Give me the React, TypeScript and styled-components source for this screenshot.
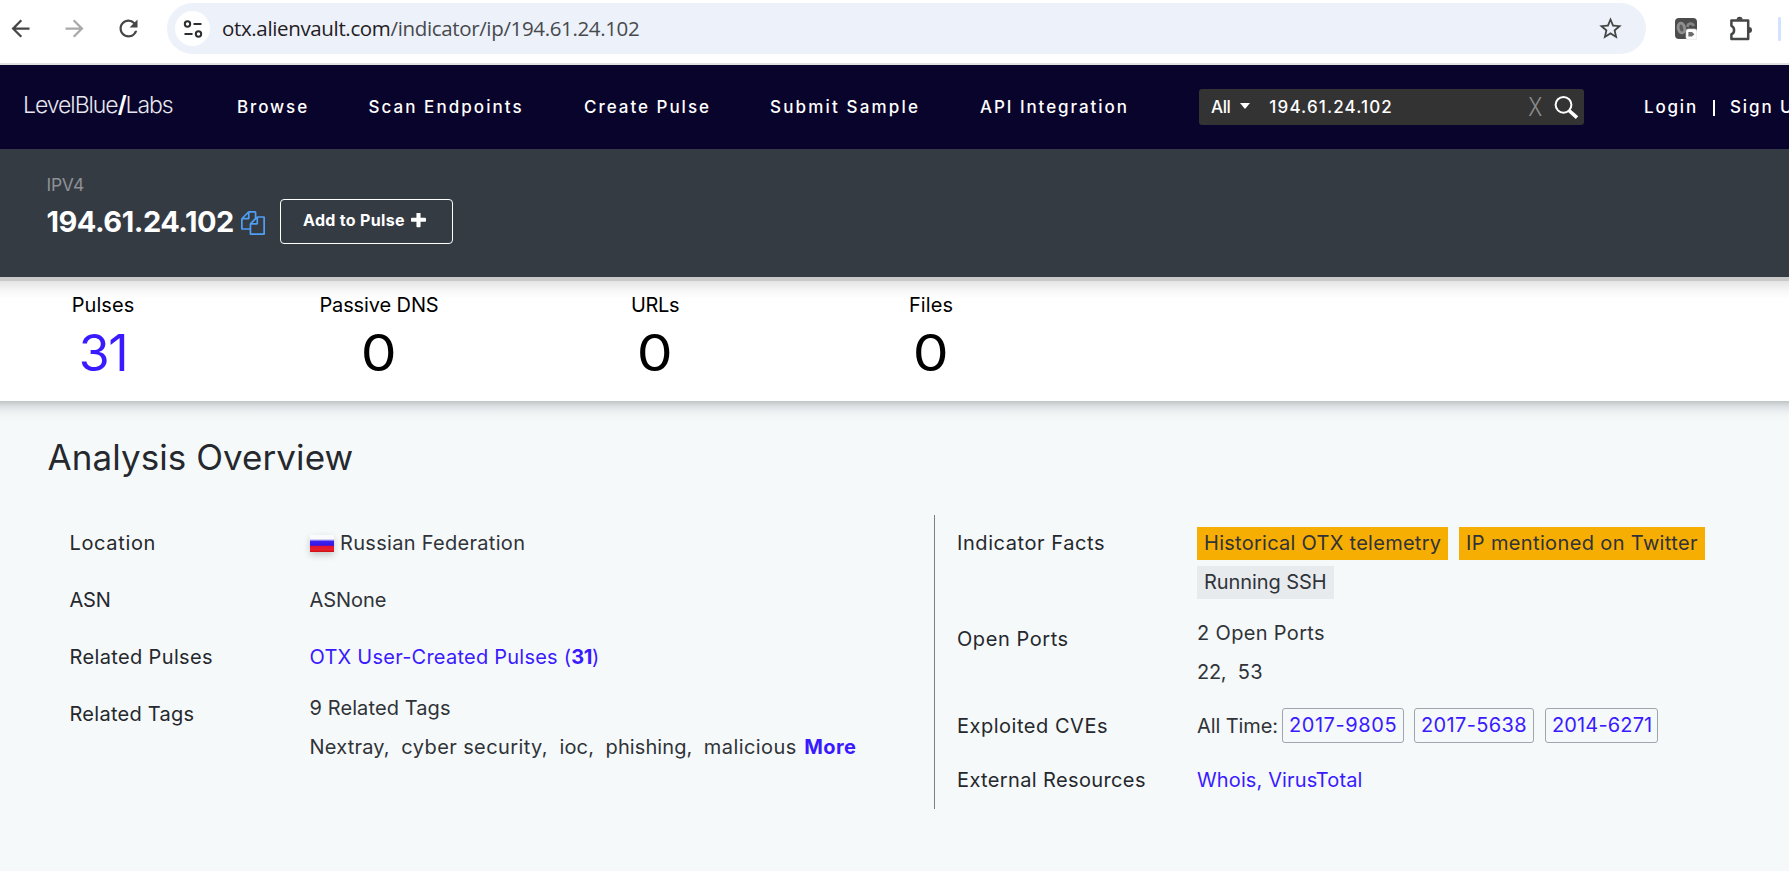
import React from 'react';
import styled, { createGlobalStyle } from 'styled-components';
import { MdArrowBack, MdArrowForward, MdRefresh, MdStarBorder } from 'react-icons/md';

const GlobalStyle = createGlobalStyle`
  * { box-sizing: border-box; }
  body {
    margin: 0;
    overflow: hidden;
    background: #f5f9fa;
    font-family: Inter, "Liberation Sans", sans-serif;
    color: #25282d;
  }
`;

const Page = styled.div`
  display: flex;
  flex-direction: column;
  width: 1789px;
  height: 871px;
  overflow: hidden;
`;

const Text = styled.span<{ $ls?: number }>`
  letter-spacing: ${(p) => p.$ls ?? 0}px;
  white-space: pre;
`;

/* ---------- browser bar ---------- */

const BrowserBar = styled.header`
  display: flex;
  align-items: center;
  flex: none;
  height: 65px;
  padding: 0 0 6px 6px;
  background: #fff;
  border-bottom: 2px solid #e1e1e1;
  color: #454746;
`;

const BrowserButton = styled.span<{ $muted?: boolean }>`
  display: flex;
  justify-content: center;
  width: 28px;
  margin-right: 26px;
  color: ${(p) => (p.$muted ? '#a9a9a9' : '#454746')};
  svg { width: 27px; height: 27px; }
`;

const AddressBar = styled.div`
  display: flex;
  align-items: center;
  width: 1479px;
  height: 51px;
  margin-left: -1px;
  padding: 0 22px 0 8px;
  border-radius: 26px;
  background: #edf1fa;
`;

const SiteInfo = styled.span`
  display: flex;
  align-items: center;
  justify-content: center;
  width: 35px;
  height: 35px;
  margin-right: 12px;
  border-radius: 50%;
  background: #fff;
`;

const Url = styled.span`
  flex: 1;
  padding-bottom: 2px;
  font: 400 20.5px/30px "Open Sans", sans-serif;
  letter-spacing: -0.35px;
  color: #474a4d;
  white-space: nowrap;
`;

const Domain = styled.span`
  color: #1f2023;
`;

const Star = styled(MdStarBorder)`
  width: 27px;
  height: 27px;
`;

const Extensions = styled.div`
  display: flex;
  align-items: center;
  gap: 31px;
  margin-left: 29px;
`;

const ProfileBar = styled.i`
  width: 3px;
  height: 24px;
  margin-left: -7px;
  border-radius: 1px;
  background: #d3e3fd;
`;

/* ---------- navigation ---------- */

const Nav = styled.nav`
  display: flex;
  align-items: center;
  flex: none;
  height: 84px;
  background: #09042b;
  color: #fff;
  font-size: 17px;
  font-weight: 500;
`;

const Logo = styled.div`
  flex: none;
  width: 237px;
  padding: 0 0 4px 23px;
  font-size: 23px;
  font-weight: 300;
  letter-spacing: -1.05px;
  color: #e6e6ee;
  b { font-weight: 700; color: #fff; }
`;

const NavLinks = styled.div`
  display: grid;
  flex: none;
  grid-template-columns: 131.5px 215.5px 186px 210px 219px;
`;

const SearchBox = styled.div`
  display: flex;
  align-items: center;
  flex: none;
  width: 385px;
  height: 36px;
  padding: 0 5px 0 12px;
  border-radius: 3px;
  background: #333;
`;

const Caret = styled.i`
  margin: -3px 19px 0 10px;
  border: 5px solid transparent;
  border-top: 6px solid #fff;
  border-bottom: 0;
`;

const Clear = styled.span`
  margin: 0 9px 0 auto;
  font-size: 25px;
  font-weight: 300;
  color: #8c8c8c;
  transform: scaleX(0.85);
`;

const Account = styled.div`
  display: flex;
  flex: none;
  gap: 13px;
  margin-left: 60px;
`;

const Divider = styled.i`
  width: 2px;
  height: 16px;
  margin: 3px 2px 0;
  background: #fff;
`;

/* ---------- indicator header ---------- */

const IndicatorHeader = styled.section`
  flex: none;
  height: 128px;
  padding: 25px 46.5px 0;
  background: #353b43;
`;

const Kind = styled.div`
  font-size: 17.5px;
  line-height: 21px;
  color: #8d9196;
`;

const IndicatorRow = styled.div`
  display: flex;
  align-items: center;
  height: 53px;
  color: #fff;
`;

const Address = styled.h1`
  width: 194.5px;
  margin: 0;
  font-size: 29px;
  font-weight: 700;
  line-height: 36px;
`;

const CopyGlyph = styled.svg`
  width: 24px;
  height: 24px;
  margin-top: 3px;
  fill: #4f9ff5;
`;

const PulseButton = styled.button`
  display: flex;
  align-items: center;
  gap: 6px;
  width: 173px;
  height: 45px;
  margin-left: 15px;
  padding: 0 0 3px 22px;
  border: 1.5px solid #fff;
  border-radius: 4px;
  background: none;
  color: #fff;
  font: 700 16px Inter, sans-serif;
`;

/* ---------- counters ---------- */

const Counters = styled.section`
  display: grid;
  grid-template-columns: repeat(4, 276px);
  flex: none;
  height: 124px;
  border-top: 4px solid #c9c9c9;
  background: linear-gradient(#e4e4e4, #f8f8f8 10px, #fff 18px);
`;

const Counter = styled.div`
  display: flex;
  flex-direction: column;
  align-items: center;
  margin-left: -70px;
  padding-top: 11px;
  color: #000;
  font-size: 20px;
  line-height: 26px;
`;

const Count = styled.div<{ $link?: boolean }>`
  margin-top: 11px;
  font-size: 50px;
  line-height: 48px;
  letter-spacing: ${(p) => (p.$link ? '-1.4px' : '0')};
  color: ${(p) => (p.$link ? '#3a1aff' : '#000')};
  transform: ${(p) => (p.$link ? 'none' : 'scaleX(1.14)')};
`;

/* ---------- overview ---------- */

const Overview = styled.main`
  flex: 1;
  padding: 34px 0 0 47.5px;
  background: linear-gradient(#bfc4c5, #dcdfe1 5px, #ebeef0 10px, #f3f7f8 16px, #f5f9fa 22px);
`;

const Title = styled.h2`
  margin: 0 0 36px;
  font-size: 35px;
  font-weight: 400;
  line-height: 44px;
`;

const Columns = styled.div`
  display: flex;
`;

const FactList = styled.dl<{ $divided?: boolean }>`
  width: ${(p) => (p.$divided ? '854px' : '886.5px')};
  height: 294px;
  margin: 0;
  padding-left: 22px;
  border-left: ${(p) => (p.$divided ? '1px solid #7d8085' : '0')};
`;

const FactRow = styled.div<{ $h: number }>`
  display: grid;
  grid-template-columns: 240px 1fr;
  height: ${(p) => p.$h}px;
  font-size: 20px;
  line-height: 39px;
`;

const Label = styled.dt`
  padding-top: 9px;
`;

const Value = styled.dd<{ $raised?: boolean }>`
  margin: 0;
  padding-top: ${(p) => (p.$raised ? 3 : 9)}px;
  color: #303338;
`;

const Line = styled.div`
  display: flex;
  align-items: center;
  height: 39px;
`;

const Tags = styled(Line)`
  gap: 11.5px;
`;

const Flag = styled.i`
  width: 24px;
  height: 17px;
  margin: 0 6px 0 0.5px;
  background: linear-gradient(#fbfbff 0 22%, #dcd8f8 26%, #3c22ee 38%, #3216e8 60%, #e01432 67%, #e8202a 88%, #c80c10);
  box-shadow: 0 3px 7px rgba(0, 0, 0, 0.2);
`;

const Link = styled.a`
  color: #3a1aff;
`;

const Strong = styled.b<{ $ls: number }>`
  font-weight: 700;
  letter-spacing: ${(p) => p.$ls}px;
`;

const More = styled(Link)`
  margin-left: -4px;
  font-weight: 700;
  letter-spacing: 0.4px;
`;

const Badge = styled.span<{ $w: number; $plain?: boolean }>`
  width: ${(p) => p.$w}px;
  height: 33px;
  margin-right: 11px;
  padding-left: 7px;
  background: ${(p) => (p.$plain ? '#e8ebee' : '#f7ae02')};
  line-height: 33px;
`;

const Cve = styled(Link)<{ $w: number; $gap: number }>`
  width: ${(p) => p.$w}px;
  height: 35px;
  margin: -3px 0 0 ${(p) => p.$gap}px;
  padding-left: 6px;
  border: 1px solid #a1a5b0;
  border-radius: 3px;
  line-height: 32px;
`;

/* ---------- icons ---------- */

const TuneIcon = () => (
  <svg width="20" height="20" viewBox="0 0 20 20" fill="none" stroke="#2b2d30" strokeWidth="2">
    <circle cx="4.5" cy="5" r="2.7" />
    <path d="M10.5 5H18.5M1.5 15H9.5" />
    <circle cx="15.5" cy="15" r="2.7" />
  </svg>
);

const RecorderIcon = () => (
  <svg width="22" height="22" viewBox="0 0 22 22">
    <rect width="22" height="21" rx="4" fill="#4c4c4c" />
    <ellipse cx="6.4" cy="10" rx="3.2" ry="5" fill="#5c5c5c" stroke="#8f8f8f" strokeWidth="2.8" transform="rotate(-12 6.4 10)" />
    <path d="M12.4 9c.4-4 5-4.4 6.4-1" fill="none" stroke="#858585" strokeWidth="2.8" />
    <rect x="11" y="11" width="11" height="11" rx="2.4" fill="#fdfdfd" stroke="#d9d9d9" strokeWidth=".6" />
    <path d="M13.4 14h3.6l2.4 2.2-2.4 2.2H13.4z" fill="#6c6c6c" />
  </svg>
);

const PuzzleIcon = () => (
  <svg width="26" height="26" viewBox="0 0 26 26">
    <path
      d="M3.4 4.6H20.2V23H3.4V18.2C6.8 17.4 7.2 11.4 3.4 9.8Z"
      fill="none"
      stroke="#454746"
      strokeWidth="2.5"
      strokeLinejoin="round"
    />
    <path d="M8.6 3.8a3 3 0 0 1 6 0zM21 11a3 3 0 0 1 0 6z" fill="#454746" />
  </svg>
);

const SearchIcon = () => (
  <svg width="26" height="26" viewBox="0 0 26 26" fill="none" stroke="#fff">
    <circle cx="10.5" cy="10.8" r="7.9" strokeWidth="2" />
    <path d="M16 16.5L24 23.6" strokeWidth="3.6" />
  </svg>
);

const CopyIcon = () => (
  <CopyGlyph viewBox="0 0 1792 1792">
    <path d="M1696 384q40 0 68 28t28 68v1216q0 40-28 68t-68 28h-960q-40 0-68-28t-28-68v-288h-544q-40 0-68-28t-28-68v-672q0-40 20-88t48-76l408-408q28-28 76-48t88-20h416q40 0 68 28t28 68v328q68-40 128-40h416zm-544 213l-299 299h299v-299zm-640-384l-299 299h299v-299zm196 647l316-316v-416h-384v416q0 40-28 68t-68 28h-416v640h512v-256q0-40 20-88t48-76zm956 804v-1152h-384v416q0 40-28 68t-68 28h-416v640h896z" />
  </CopyGlyph>
);

const PlusIcon = () => (
  <svg width="15" height="15" viewBox="192 192 1408 1408" fill="#fff">
    <path d="M1600 736v192q0 40-28 68t-68 28h-416v416q0 40-28 68t-68 28h-192q-40 0-68-28t-28-68v-416h-416q-40 0-68-28t-28-68v-192q0-40 28-68t68-28h416v-416q0-40 28-68t68-28h192q40 0 68 28t28 68v416h416q40 0 68 28t28 68z" />
  </svg>
);

/* ---------- data ---------- */

const navLinks: [string, number][] = [
  ['Browse', 1.9],
  ['Scan Endpoints', 2.05],
  ['Create Pulse', 1.98],
  ['Submit Sample', 2.17],
  ['API Integration', 1.94],
];

const counters: [string, string, number, boolean][] = [
  ['Pulses', '31', 0.07, true],
  ['Passive DNS', '0', -0.11, false],
  ['URLs', '0', -0.35, false],
  ['Files', '0', 0.09, false],
];

const tags: [string, number][] = [
  ['Nextray,', 0.2],
  ['cyber security,', 0.4],
  ['ioc,', 0.15],
  ['phishing,', 0.08],
  ['malicious', 0.42],
];

export default function App() {
  return (
    <Page>
      <GlobalStyle />
      <BrowserBar>
        <BrowserButton><MdArrowBack /></BrowserButton>
        <BrowserButton $muted><MdArrowForward /></BrowserButton>
        <BrowserButton><MdRefresh /></BrowserButton>
        <AddressBar>
          <SiteInfo><TuneIcon /></SiteInfo>
          <Url><Domain>otx.alienvault.com</Domain>/indicator/ip/194.61.24.102</Url>
          <Star />
        </AddressBar>
        <Extensions>
          <RecorderIcon />
          <PuzzleIcon />
          <ProfileBar />
        </Extensions>
      </BrowserBar>

      <Nav>
        <Logo>LevelBlue<b>/</b>Labs</Logo>
        <NavLinks>
          {navLinks.map(([name, ls]) => <Text key={name} $ls={ls}>{name}</Text>)}
        </NavLinks>
        <SearchBox>
          <Text $ls={-0.42}>All</Text>
          <Caret />
          <Text $ls={1.13}>194.61.24.102</Text>
          <Clear>X</Clear>
          <SearchIcon />
        </SearchBox>
        <Account>
          <Text $ls={1.8}>Login</Text>
          <Divider />
          <Text $ls={1.9}>Sign Up</Text>
        </Account>
      </Nav>

      <IndicatorHeader>
        <Kind><Text $ls={-0.3}>IPV4</Text></Kind>
        <IndicatorRow>
          <Address><Text $ls={-0.49}>194.61.24.102</Text></Address>
          <CopyIcon />
          <PulseButton><Text $ls={0.32}>Add to Pulse</Text><PlusIcon /></PulseButton>
        </IndicatorRow>
      </IndicatorHeader>

      <Counters>
        {counters.map(([name, count, ls, link]) => (
          <Counter key={name}>
            <Text $ls={ls}>{name}</Text>
            <Count $link={link}>{count}</Count>
          </Counter>
        ))}
      </Counters>

      <Overview>
        <Title><Text $ls={0.07}>Analysis Overview</Text></Title>
        <Columns>
          <FactList>
            <FactRow $h={57}>
              <Label><Text $ls={0.65}>Location</Text></Label>
              <Value><Line><Flag /><Text $ls={0.3}>Russian Federation</Text></Line></Value>
            </FactRow>
            <FactRow $h={57}>
              <Label><Text $ls={-0.2}>ASN</Text></Label>
              <Value><Text $ls={-0.05}>ASNone</Text></Value>
            </FactRow>
            <FactRow $h={57}>
              <Label><Text $ls={0.36}>Related Pulses</Text></Label>
              <Value>
                <Link><Text $ls={0.24}>OTX User-Created Pulses (</Text><Strong $ls={-0.5}>31</Strong>)</Link>
              </Value>
            </FactRow>
            <FactRow $h={90}>
              <Label><Text $ls={0.27}>Related Tags</Text></Label>
              <Value $raised>
                <Line><Text $ls={0.1}>9 Related Tags</Text></Line>
                <Tags>
                  {tags.map(([tag, ls]) => <Text key={tag} $ls={ls}>{tag}</Text>)}
                  <More>More</More>
                </Tags>
              </Value>
            </FactRow>
          </FactList>

          <FactList $divided>
            <FactRow $h={96}>
              <Label><Text $ls={0.57}>Indicator Facts</Text></Label>
              <Value>
                <Line>
                  <Badge $w={251}><Text $ls={0.27}>Historical OTX telemetry</Text></Badge>
                  <Badge $w={246}><Text $ls={0.37}>IP mentioned on Twitter</Text></Badge>
                </Line>
                <Line><Badge $plain $w={137}><Text $ls={-0.08}>Running SSH</Text></Badge></Line>
              </Value>
            </FactRow>
            <FactRow $h={87}>
              <Label><Text $ls={0.57}>Open Ports</Text></Label>
              <Value $raised>
                <Line><Text $ls={0.34}>2 Open Ports</Text></Line>
                <Tags><Text $ls={-0.3}>22,</Text><Text $ls={0.3}>53</Text></Tags>
              </Value>
            </FactRow>
            <FactRow $h={54}>
              <Label><Text $ls={0.52}>Exploited CVEs</Text></Label>
              <Value>
                <Line>
                  <Text $ls={-0.1}>All Time:</Text>
                  <Cve $w={122} $gap={4}><Text $ls={0.58}>2017-9805</Text></Cve>
                  <Cve $w={120} $gap={10}><Text $ls={0.36}>2017-5638</Text></Cve>
                  <Cve $w={113} $gap={11}><Text $ls={0.15}>2014-6271</Text></Cve>
                </Line>
              </Value>
            </FactRow>
            <FactRow $h={57}>
              <Label><Text $ls={0.37}>External Resources</Text></Label>
              <Value><Link><Text $ls={0.12}>Whois, VirusTotal</Text></Link></Value>
            </FactRow>
          </FactList>
        </Columns>
      </Overview>
    </Page>
  );
}
